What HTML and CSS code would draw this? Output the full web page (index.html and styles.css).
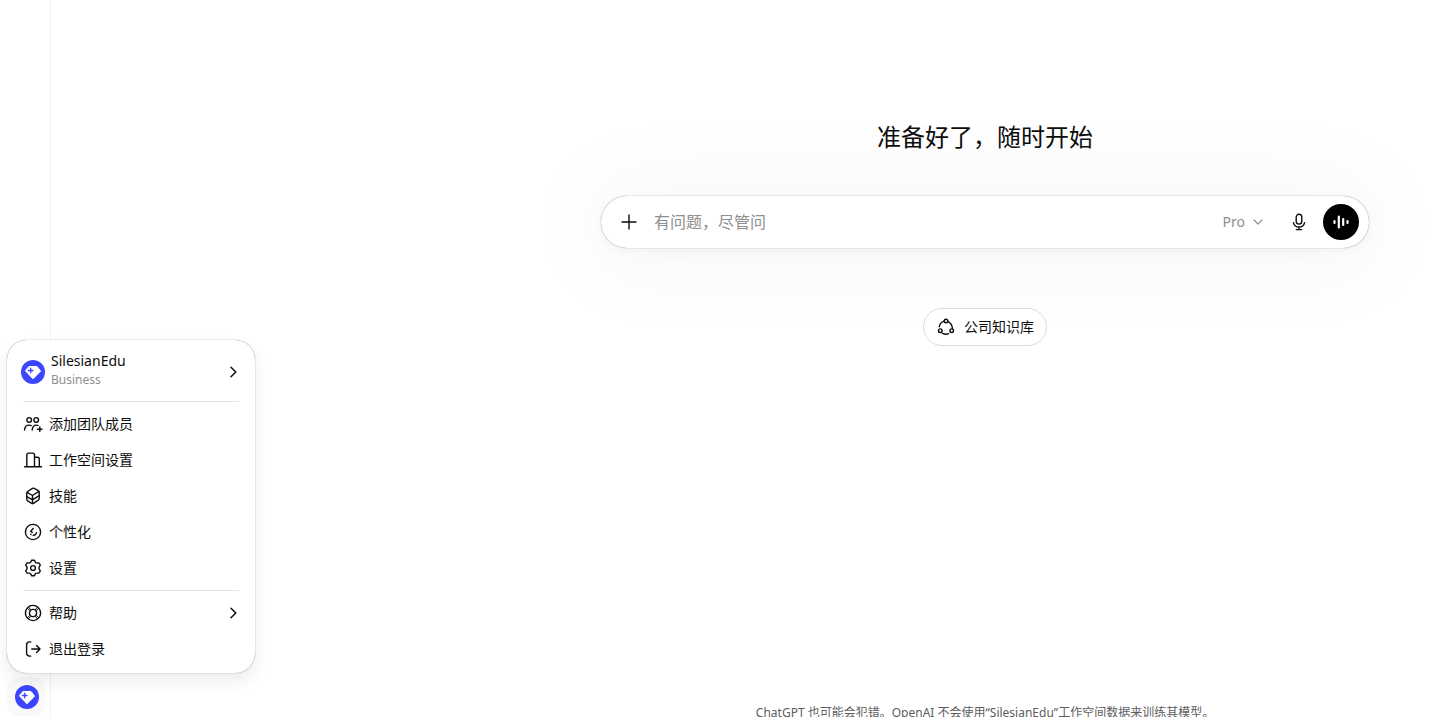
FILE: index.html
```html
<!DOCTYPE html>
<html lang="zh-CN">
  <head>
    <meta charset="UTF-8" />
    <meta name="viewport" content="width=device-width, initial-scale=1.0" />
    <title>ChatGPT</title>
    <link rel="stylesheet" href="styles.css">
  </head>

  <body>
    <!-- 侧边栏 -->
    <aside class="rail">
      <button class="rail-account" type="button" aria-label="SilesianEdu">
        <svg class="avatar" viewBox="0 0 24 24">
          <circle cx="12" cy="12" r="12" fill="#3c46ff" />
          <path d="M8.200 6.500h7.800l3.600 4.600L12 18.800 4.600 11z" fill="#fff" stroke="#fff" stroke-linejoin="round" />
          <path d="M9.700 8.200v4.600M7.400 10.500H12" stroke="#3c46ff" stroke-width="1.300" />
        </svg>
      </button>

      <!-- 账户菜单 -->
      <nav class="menu" aria-label="账户">
        <button class="menu-head" type="button">
          <svg class="avatar" viewBox="0 0 24 24">
            <circle cx="12" cy="12" r="12" fill="#3c46ff" />
            <path d="M8.200 6.500h7.800l3.600 4.600L12 18.800 4.600 11z" fill="#fff" stroke="#fff" stroke-linejoin="round" />
            <path d="M9.700 8.200v4.600M7.400 10.500H12" stroke="#3c46ff" stroke-width="1.300" />
          </svg>
          <span class="account">
            <span class="account-name">SilesianEdu</span>
            <span class="account-plan">Business</span>
          </span>
          <svg class="arrow" viewBox="0 0 16 16"><path d="M6 3.2 10.8 8 6 12.8" /></svg>
        </button>
        <hr>
        <a class="menu-item" href="#invite">
          <svg class="icon" viewBox="0 0 20 20">
            <circle cx="6.2" cy="5.9" r="2.3" />
            <circle cx="13.2" cy="5.9" r="2.3" />
            <path d="M1.500 16c.3-3 2-4.900 4.600-4.900.8 0 1.500.2 2.100.5M9.200 16c.3-3 1.700-4.900 4.100-4.900.7 0 1.300.1 1.800.4M16.800 13v4.400M14.600 15.200H19" />
          </svg>
          <span>添加团队成员</span>
        </a>
        <a class="menu-item" href="#workspace">
          <svg class="icon" viewBox="0 0 20 20">
            <path d="M1.5 16.8h17M3.8 16.8V5c0-1.2.7-1.9 1.9-1.9h3.9c1.2 0 1.9.7 1.9 1.9v11.8M11.5 7.3h2.900c1.200 0 1.900.7 1.900 1.900v7.600" />
          </svg>
          <span>工作空间设置</span>
        </a>
        <a class="menu-item" href="#skills">
          <svg class="icon" viewBox="0 0 20 20">
            <path d="M11.200 2.300 15.300 4.600c.6.400.9.900.9 1.600v6.200c0 .7-.3 1.300-.9 1.700l-4.900 3.200c-.6.400-1.200.4-1.800 0l-3.900-2.400c-.6-.4-.9-.9-.9-1.600V7.200c0-.7.3-1.300.9-1.700l4.700-3.100c.6-.4 1.200-.4 1.800-.1z" />
            <path d="M4.100 6.400 9.500 9.500v8M9.500 9.500 15.900 5.400M3.800 10.700l5.700 3.200 6.700-4.300" />
          </svg>
          <span>技能</span>
        </a>
        <a class="menu-item" href="#personalization">
          <svg class="icon" viewBox="0 0 20 20">
            <circle cx="10" cy="10" r="7.6" />
            <path d="M10.200 6.600 7.700 9.300l1.600 1M10.200 13.200c1.700.1 3-.8 3.300-2.500M7.800 12.200l.2.200" />
          </svg>
          <span>个性化</span>
        </a>
        <a class="menu-item" href="#settings">
          <svg class="icon" viewBox="0 0 20 20">
            <circle cx="10" cy="10" r="2.4" />
            <path d="M8.7 2.2h2.6l1.2 2.1c.3.4.6.6 1.1.6l2.4.1 1.3 2.2-1.2 2c-.3.5-.3 1.1 0 1.6l1.2 2-1.3 2.2-2.4.1c-.5 0-.8.2-1.1.6l-1.2 2.1H8.7l-1.2-2.1c-.3-.4-.6-.6-1.1-.6L4 15l-1.3-2.2 1.2-2c.3-.5.3-1.1 0-1.600l-1.200-2L4 5l2.400-.1c.5 0 .8-.2 1.100-.6z" />
          </svg>
          <span>设置</span>
        </a>
        <hr>
        <a class="menu-item" href="#help">
          <svg class="icon" viewBox="0 0 20 20">
            <circle cx="10" cy="10" r="7.6" />
            <circle cx="10" cy="10" r="3.600" />
            <path d="m4.300 5.300 2.900 2.500M15.700 5.300l-2.900 2.500M4.300 14.700l2.900-2.500M15.700 14.700l-2.900-2.500M5.600 4.200l1.900 2.200M14.400 4.200l-1.900 2.200M5.600 15.800l1.900-2.200M14.400 15.800l-1.900-2.200" stroke-width="1" />
          </svg>
          <span>帮助</span>
          <svg class="arrow" viewBox="0 0 16 16"><path d="M6 3.2 10.8 8 6 12.8" /></svg>
        </a>
        <a class="menu-item" href="#logout">
          <svg class="icon" viewBox="0 0 20 20">
            <path d="M7.800 2.900H6.600c-2 0-3 1-3 3v8.200c0 2 1 3 3 3h1.200M8.800 10h8M13.600 6.500l3.400 3.500-3.400 3.500" />
          </svg>
          <span>退出登录</span>
        </a>
      </nav>
    </aside>

    <!-- 主区域 -->
    <main class="main">
      <h1>准备好了，随时开始</h1>

      <form class="composer">
        <button class="round" type="button" aria-label="添加">
          <svg class="icon" viewBox="0 0 20 20"><path d="M10 3v14M3 10h14" /></svg>
        </button>
        <input class="prompt" type="text" placeholder="有问题，尽管问" aria-label="有问题，尽管问">
        <button class="model" type="button">
          Pro
          <svg class="caret" viewBox="0 0 12 12"><path d="m2 4 4 4 4-4" /></svg>
        </button>
        <button class="round" type="button" aria-label="听写">
          <svg class="icon" viewBox="0 0 20 20">
            <rect x="7.2" y="2.3" width="5.6" height="9.8" rx="2.8" />
            <path d="M4.500 10.800c.6 2.600 2.700 4.200 5.500 4.200s4.900-1.600 5.500-4.200M10 15v2.600M7.300 17.600h5.400" />
          </svg>
        </button>
        <button class="round voice" type="button" aria-label="语音">
          <svg class="icon" viewBox="0 0 20 20"><path d="M3.500 9v2M7.800 4.500v11M12.200 7v6M16.500 9v2" /></svg>
        </button>
      </form>

      <button class="chip" type="button">
        <svg class="icon" viewBox="0 0 20 20">
          <circle cx="10" cy="4" r="1.8" />
          <circle cx="4.300" cy="13.700" r="1.8" />
          <circle cx="15.700" cy="13.700" r="1.8" />
          <path d="M7.900 4.200C5.400 5.100 3.800 7 3.300 9.600M11.900 4.300c2.500 1.300 4.400 3.900 4.600 7.500M6.500 16.300c1.700.9 4 1.200 6.100.4" />
        </svg>
        <span>公司知识库</span>
      </button>

      <p class="notice">ChatGPT 也可能会犯错。OpenAI 不会使用“SilesianEdu”工作空间数据来训练其模型。</p>
    </main>
  </body>
</html>
```
FILE: styles.css
```css
* {
  box-sizing: border-box;
  margin: 0;
  padding: 0;
}

body {
  display: flex;
  height: 100vh;
  overflow: hidden;
  background: #fff;
  color: #0d0d0d;
  font-family: "Noto Sans", "Noto Sans CJK SC", sans-serif;
  font-size: 14px;
  line-height: 20px;
}

button,
input {
  border: none;
  background: none;
  color: inherit;
  font: inherit;
}

a {
  color: inherit;
  text-decoration: none;
}

svg {
  display: block;
  flex: none;
  fill: none;
  stroke: currentColor;
  stroke-linecap: round;
  stroke-linejoin: round;
}

.icon {
  width: 20px;
  height: 20px;
  stroke-width: 1.4;
}

.avatar {
  width: 24px;
  height: 24px;
  stroke: none;
}

/* 侧边栏 */
.rail {
  position: relative;
  flex: none;
  display: flex;
  flex-direction: column;
  justify-content: flex-end;
  width: 51px;
  padding: 0 6px 1px 7px;
  border-right: 1px solid #f1f1f1;
}

.rail-account {
  width: 38px;
  padding: 8px 6px 7px 8px;
  border-radius: 10px;
  background: #f9f9f9;
}

/* 账户菜单，浮在页面上方 */
.menu {
  position: absolute;
  left: 7px;
  bottom: 44px;
  z-index: 10;
  width: 248px;
  padding: 6px;
  border-radius: 20px;
  background: #fff;
  box-shadow: 0 0 1px rgba(0, 0, 0, 0.62), 0 8px 16px rgba(0, 0, 0, 0.08);
}

.menu hr {
  height: 1px;
  margin: 4px 10px;
  border: none;
  background: #e3e3e3;
}

.menu-head,
.menu-item {
  display: flex;
  align-items: center;
  width: 100%;
  padding: 0 8px 0 10px;
  gap: 6px;
  height: 36px;
  text-align: left;
}

.menu-head {
  height: 51px;
  padding-left: 8px;
}

.account {
  display: flex;
  flex-direction: column;
  padding-bottom: 3px;
}

.account-plan {
  color: #8f8f8f;
  font-size: 12px;
  line-height: 18px;
}

.arrow {
  width: 16px;
  height: 16px;
  margin-left: auto;
  stroke-width: 1.5;
}

/* 主区域 */
.main {
  flex: 1;
  display: flex;
  flex-direction: column;
  align-items: center;
  min-width: 0;
  padding: 120px 86px 0 550px;
}

h1 {
  font-size: 24px;
  font-weight: 400;
  line-height: 34px;
}

.composer {
  display: flex;
  align-items: center;
  width: 100%;
  max-width: 768px;
  height: 52px;
  margin-top: 42px;
  padding: 0 10px;
  border-radius: 26px;
  background: #fff;
  box-shadow: 0 0 1px rgba(0, 0, 0, 0.62), 0 4px 12px rgba(0, 0, 0, 0.03), 0 4px 96px 16px rgba(0, 0, 0, 0.04);
}

.round {
  display: grid;
  place-items: center;
  flex: none;
  width: 36px;
  height: 36px;
  border-radius: 50%;
}

.prompt {
  flex: 1;
  min-width: 0;
  padding-left: 7px;
  outline: none;
  font-size: 16px;
  line-height: 24px;
}

.prompt::placeholder {
  color: #8f8f8f;
  opacity: 1;
}

.model {
  display: flex;
  align-items: center;
  gap: 7px;
  margin-right: 17px;
  color: #8f8f8f;
}

.caret {
  width: 12px;
  height: 12px;
  stroke-width: 1.2;
}

.voice {
  margin-left: 6px;
  background: #000;
  color: #fff;
}

.voice .icon {
  stroke-width: 2.2;
}

.chip {
  display: flex;
  align-items: center;
  gap: 8px;
  height: 38px;
  margin-top: 60px;
  padding: 0 12px;
  border: 1px solid #dcdcdc;
  border-radius: 19px;
  background: #fff;
}

.notice {
  margin-top: auto;
  margin-bottom: -4px;
  color: #5d5d5d;
  font-size: 12px;
  line-height: 16px;
  white-space: nowrap;
}
```
